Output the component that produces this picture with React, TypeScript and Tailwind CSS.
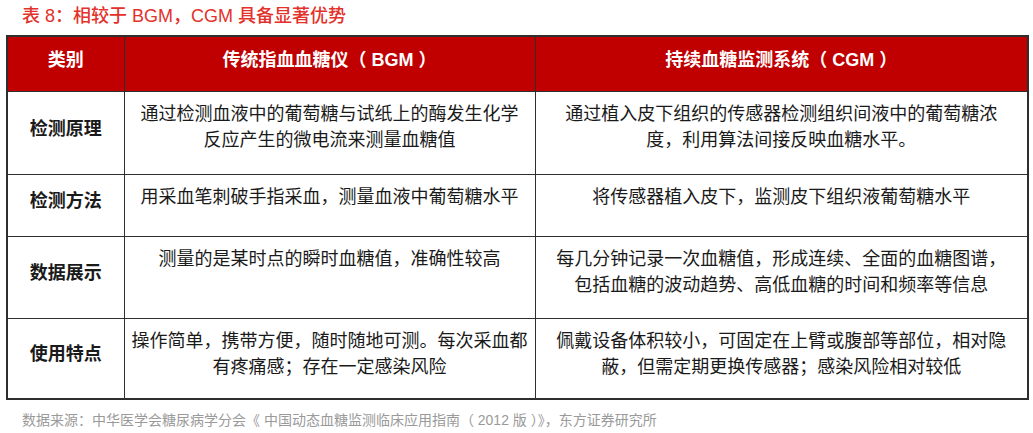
const rows = [
  {
    label: "检测原理",
    h: "h-[83px]",
    bgm: ["通过检测血液中的葡萄糖与试纸上的酶发生化学", "反应产生的微电流来测量血糖值"],
    cgm: ["通过植入皮下组织的传感器检测组织间液中的葡萄糖浓", "度，利用算法间接反映血糖水平。"],
  },
  {
    label: "检测方法",
    h: "h-[62px]",
    bgm: ["用采血笔刺破手指采血，测量血液中葡萄糖水平"],
    cgm: ["将传感器植入皮下，监测皮下组织液葡萄糖水平"],
  },
  {
    label: "数据展示",
    h: "h-[82px]",
    bgm: ["测量的是某时点的瞬时血糖值，准确性较高"],
    cgm: ["每几分钟记录一次血糖值，形成连续、全面的血糖图谱，", "包括血糖的波动趋势、高低血糖的时间和频率等信息"],
  },
  {
    label: "使用特点",
    h: "h-[81px]",
    bgm: ["操作简单，携带方便，随时随地可测。每次采血都", "有疼痛感；存在一定感染风险"],
    cgm: ["佩戴设备体积较小，可固定在上臂或腹部等部位，相对隐", "蔽，但需定期更换传感器；感染风险相对较低"],
  },
];

const Lines = ({ lines }: { lines: string[] }) => (
  <>
    {lines.map((l, i) => (
      <div key={i} className="whitespace-nowrap">
        {l}
      </div>
    ))}
  </>
);

const App = () => {
  return (
    <div
      className="w-[1033px] h-[433px] bg-white overflow-hidden"
      style={{ fontFamily: '"Liberation Sans", "Noto Sans CJK SC", sans-serif' }}
    >
      {/* title */}
      <div className="pl-[22px] pt-[4px] h-[35px] text-[18px] leading-[24px] font-medium text-[#e3312b]">
        表 8：相较于 BGM，CGM 具备显著优势
      </div>

      {/* table */}
      <table className="ml-[6px] w-[1021px] border-collapse border-2 border-[#2e2e2e] table-fixed text-[18px] leading-[26px] text-[#1a1a1a]">
        <colgroup>
          <col className="w-[117px]" />
          <col className="w-[411px]" />
          <col className="w-[493px]" />
        </colgroup>
        <thead>
          <tr className="h-[55px] bg-[#c00000] text-white font-bold">
            <th className="border border-[#2e2e2e] align-middle pb-2 font-bold">类别</th>
            <th className="border border-[#2e2e2e] align-middle pb-2 font-bold whitespace-pre">传统指血血糖仪（ BGM ）</th>
            <th className="border border-[#2e2e2e] align-middle pb-2 font-bold whitespace-pre">持续血糖监测系统（ CGM ）</th>
          </tr>
        </thead>
        <tbody>
          {rows.map((r) => (
            <tr key={r.label} className={r.h}>
              <td className="border border-[#2e2e2e] align-middle text-center font-bold pb-2">{r.label}</td>
              <td className="border border-[#2e2e2e] align-top text-center pt-[9px]">
                <Lines lines={r.bgm} />
              </td>
              <td className="border border-[#2e2e2e] align-top text-center pt-[9px]">
                <Lines lines={r.cgm} />
              </td>
            </tr>
          ))}
        </tbody>
      </table>

      {/* source */}
      <div className="pl-[22px] pt-[10px] text-[14px] leading-[20px] text-[#9a9a9a] whitespace-pre">
        数据来源：中华医学会糖尿病学分会《 中国动态血糖监测临床应用指南（ 2012 版 ）》，东方证券研究所
      </div>
    </div>
  );
};

export default App;
